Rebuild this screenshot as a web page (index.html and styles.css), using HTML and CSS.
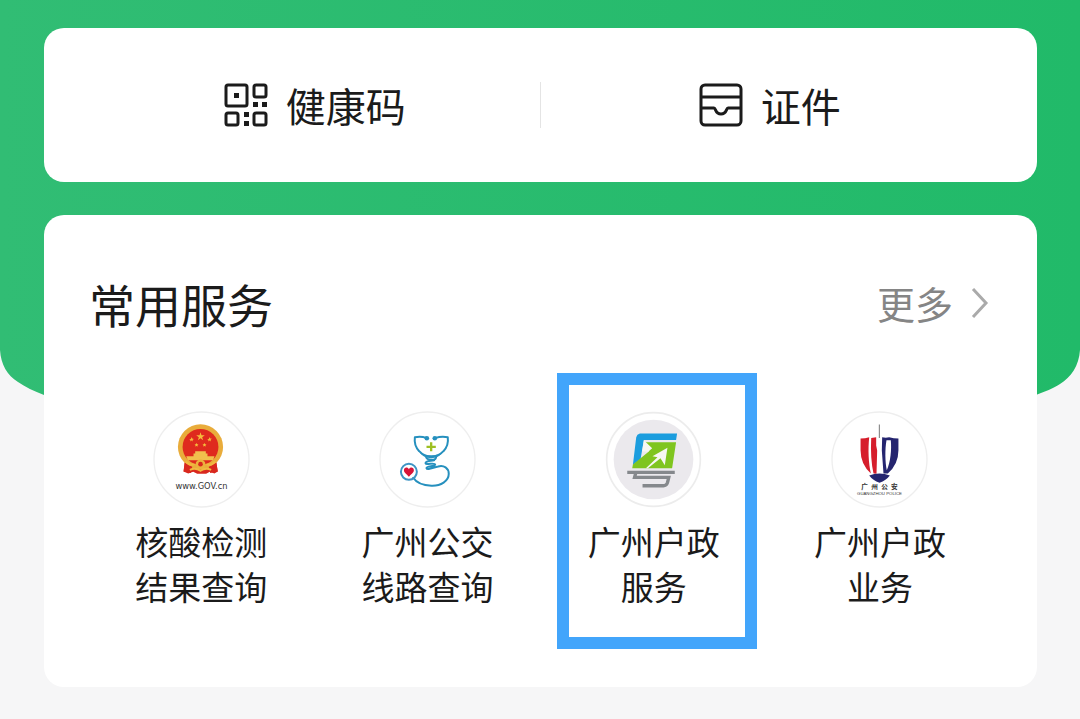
FILE: index.html
```html
<!DOCTYPE html>
<html lang="zh-CN">
<head>
    <meta charset="UTF-8">
    <meta name="viewport" content="width=device-width, initial-scale=1.0">
    <title>常用服务</title>
    <link rel="stylesheet" href="styles.css">
</head>
<body>
    <div class="page">
        <svg class="backdrop" viewBox="0 0 1080 420" preserveAspectRatio="none" aria-hidden="true">
            <defs>
                <linearGradient id="green" x1="0" x2="1" y1="0" y2="0">
                    <stop offset="0" stop-color="#31bd74"/>
                    <stop offset="1" stop-color="#21ba69"/>
                </linearGradient>
            </defs>
            <path fill="url(#green)" d="M0 0H1080V350C1079 366 1071 377 1060 384C1054 388 1044 392 1036 395Q960 420 860 420H220Q120 420 44 395C34 391 25 387 18 382C7 375 1 365 0 350Z"/>
        </svg>

        <main class="container">
            <nav class="card quick">
                <a class="quick-item quick-code" href="#">
                    <svg class="quick-icon" viewBox="0 0 44 44" fill="none" stroke="#1b1b1b" stroke-width="3" aria-hidden="true">
                        <rect x="2" y="2" width="21" height="21" rx="2"/>
                        <rect x="30" y="2" width="12" height="12" rx="2"/>
                        <rect x="2" y="30" width="12" height="12" rx="2"/>
                        <rect x="30" y="30" width="12" height="12" rx="2"/>
                        <path fill="#1b1b1b" stroke="none" d="M10 10h5v5h-5zM29 19h5v5h-5zM38 19h5v5h-5zM20 29h5v5h-5zM20 38h5v5h-5z"/>
                    </svg>
                    <span>健康码</span>
                </a>
                <a class="quick-item quick-cert" href="#">
                    <svg class="quick-icon" viewBox="0 0 44 44" fill="none" stroke="#1b1b1b" stroke-width="3" stroke-linejoin="round" aria-hidden="true">
                        <rect x="2" y="2" width="40" height="40" rx="4"/>
                        <path d="M2 14H42M2 25H15C17 25 16 31 22 31S27 25 29 25H42"/>
                    </svg>
                    <span>证件</span>
                </a>
            </nav>

            <section class="card services">
                <header class="services-header">
                    <h2 class="services-title">常用服务</h2>
                    <a class="more" href="#">更多
                        <svg class="more-arrow" viewBox="0 0 18 30" fill="none" stroke="#aaa" stroke-width="3" aria-hidden="true">
                            <path d="M2 1L15 15L2 29"/>
                        </svg>
                    </a>
                </header>

                <div class="service-grid">
                    <a class="service" href="#">
                        <svg class="service-icon" viewBox="22 16 292 292">
                            <circle cx="168" cy="162" r="143" fill="#fff" stroke="#eee" stroke-width="4"/>
                            <path fill="#d9281e" d="M119 163L114 198L128 204L143 199L155 205H182L193 199L207 204L217 198L211 163Z"/>
                            <circle cx="165" cy="124" r="68" fill="#e9ac3b"/>
                            <circle cx="165" cy="124" r="54" fill="#df2a1e"/>
                            <path fill="#f5bd3c" d="M165 80L168 89H178L170 95L173 104L165 98L157 104L160 95L152 89H162ZM138 94L140 99L145 100L141 103L142 108L138 105L133 108L135 103L131 100H136ZM192 94L194 99H199L195 103L197 108L192 105L188 108L189 103L185 100H190ZM153 112L155 116H159L156 119L157 123L153 121L149 123L150 119L147 116H151ZM177 112L179 116H183L180 119L181 123L177 121L173 123L174 119L171 116H175Z"/>
                            <path fill="#f1c04d" d="M149 137H181V144H186V152H207L203 164H127L122 152H144V144H149Z"/>
                            <path fill="#d9281e" d="M117 172L140 184L136 203L114 198ZM213 172L190 184L194 203L217 198Z"/>
                            <circle cx="165" cy="177" r="15" fill="#ecb13d"/>
                            <circle cx="165" cy="176" r="7" fill="#d9281e"/>
                            <path fill="none" stroke="#f1b941" stroke-width="6" d="M121 168Q133 182 147 176M209 168Q197 182 183 176M133 193Q150 185 165 196Q180 185 197 193"/>
                            <text class="gov-label" x="168" y="252">www.GOV.cn</text>
                        </svg>
                        <span class="service-name">核酸检测<br>结果查询</span>
                    </a>
                    <a class="service" href="#">
                        <svg class="service-icon" viewBox="20 16 292 292" fill="none">
                            <circle cx="166" cy="162" r="143" fill="#fff" stroke="#eee" stroke-width="4"/>
                            <g stroke="#2690be" stroke-width="6" stroke-linecap="round" stroke-linejoin="round">
                                <path d="M162 97C151 93 139 93 128 95C126 110 130 126 141 137C151 148 162 153 177 153C192 153 204 148 214 137C225 126 229 110 227 95C216 93 203 93 190 97"/>
                                <path d="M162 155Q164 162 176 163H184Q191 162 192 155"/>
                                <path d="M186 164C174 167 160 167 160 173C160 180 188 170 189 177C189 184 162 180 163 188C165 195 183 186 198 183C215 178 230 188 230 205C230 227 206 242 178 241C151 240 132 231 123 217"/>
                                <circle cx="110" cy="199" r="24" stroke="#3d94c4"/>
                            </g>
                            <path fill="#2690be" d="M143 141C160 153 194 153 211 141C203 153 192 158 177 158S151 153 143 141Z"/>
                            <circle cx="164" cy="98" r="7" fill="#2690be"/>
                            <circle cx="188" cy="98" r="7" fill="#2690be"/>
                            <path stroke="#9dbf22" stroke-width="7" d="M177 110V137M163 124H191"/>
                            <path fill="#d81438" d="M110 214C104 206 95 202 95 194C95 184 107 184 110 191C113 184 125 184 125 194C125 202 116 206 110 214Z"/>
                        </svg>
                        <span class="service-name">广州公交<br>线路查询</span>
                    </a>
                    <a class="service service-selected" href="#">
                        <svg class="service-icon" viewBox="20 16 292 292">
                            <circle cx="166" cy="162" r="141" fill="#fff" stroke="#ececec" stroke-width="5"/>
                            <circle cx="166" cy="162" r="120" fill="#ebe9ed"/>
                            <path fill="#1b9dde" d="M125 84H237L234 103H137L127 161L104 178L114 95Q116 86 125 84Z"/>
                            <path fill="#7fc51f" d="M138 110H234L222 188H102L104 177L152 138Z"/>
                            <path fill="#f6f7f3" d="M137 104L162 128L150 139L132 137ZM208 127L200 179L187 158L149 188H143L178 155L163 152Z"/>
                            <path fill="none" stroke="#85888c" stroke-width="10" d="M87 201H230M113 201L109 216H212L208 232Q205 241 196 241H133"/>
                        </svg>
                        <span class="service-name">广州户政<br>服务</span>
                    </a>
                    <a class="service" href="#">
                        <svg class="service-icon" viewBox="19 16 292 292">
                            <circle cx="165" cy="162" r="143" fill="#fff" stroke="#eee" stroke-width="4"/>
                            <path fill="#777" d="M163 57H166V97H163Z"/>
                            <path fill="#d61e2c" d="M108 99Q122 99 134 95C130 132 132 173 139 204Q108 176 108 134ZM140 97L155 95V120L158 135L156 205L147 204Q137 160 140 97Z"/>
                            <path fill="#25256f" fill-rule="evenodd" d="M173 95Q184 98 194 95Q208 99 222 99V134Q222 176 190 204H177L172 135ZM186 104C181 132 182 170 187 194C198 170 202 132 199 104Z"/>
                            <path fill="#25256f" d="M134 210Q149 204 165 204Q181 204 196 210Q185 225 165 232Q145 225 134 210Z"/>
                            <text class="police-label" x="165" y="252">广&#8194;州&#8194;公&#8194;安</text>
                            <text class="police-sub" x="165" y="268">GUANGZHOU POLICE</text>
                        </svg>
                        <span class="service-name">广州户政<br>业务</span>
                    </a>
                </div>
            </section>
        </main>
    </div>
</body>
</html>
```
FILE: styles.css
```css
:root {
    --text: #1b1b1b;
    --text-muted: #858585;
    --page-bg: #f6f6f7;
    --highlight: #42a5fb;
}

* {
    margin: 0;
    padding: 0;
    box-sizing: border-box;
}

body {
    font-family: "Noto Sans CJK SC", "Noto Sans", sans-serif;
    background-color: var(--page-bg);
    color: var(--text);
}

a {
    color: inherit;
    text-decoration: none;
}

/* backdrop and content share one grid cell */
.page {
    display: grid;
    grid-template-columns: 100%;
}

.backdrop,
.container {
    grid-area: 1 / 1;
}

.backdrop {
    width: 100%;
    height: 420px;
}

.container {
    display: flex;
    flex-direction: column;
    gap: 33px;
    padding: 28px 43px 30px 44px;
    z-index: 1;
}

.card {
    background-color: #fff;
    border-radius: 20px;
}

.quick {
    display: grid;
    grid-template-columns: 1fr 1fr;
    align-items: center;
    padding: 54px 0;
}

.quick-item {
    display: flex;
    align-items: center;
    justify-content: center;
    gap: 18px;
    height: 46px;
    font-size: 40px;
    line-height: 44px;
}

.quick-code {
    padding-left: 46px;
    border-right: 1px solid #e4e4e4;
}

.quick-cert {
    padding-right: 38px;
}

.quick-icon {
    width: 44px;
    height: 44px;
}

.services {
    padding: 56px 44px 78px;
}

.services-header {
    display: flex;
    align-items: center;
    justify-content: space-between;
    padding: 0 4px 0 1px;
}

.services-title {
    font-size: 46px;
    font-weight: 400;
    line-height: 64px;
}

.more {
    display: flex;
    align-items: center;
    gap: 18px;
    font-size: 38px;
    line-height: 60px;
    color: var(--text-muted);
}

.more-arrow {
    width: 18px;
    height: 30px;
}

.service-grid {
    display: grid;
    grid-template-columns: repeat(4, 1fr);
    margin-top: 76px;
}

.service {
    position: relative;
    display: flex;
    flex-direction: column;
    align-items: center;
    gap: 11px;
}

.service-icon {
    width: 97px;
    height: 97px;
}

.service-name {
    font-size: 33px;
    line-height: 45px;
    text-align: center;
}

.service-selected::after {
    content: "";
    position: absolute;
    inset: -38px 10px -40px 16px;
    border: 12px solid var(--highlight);
}

.gov-label,
.police-label,
.police-sub {
    text-anchor: middle;
    fill: #333;
}

.gov-label {
    font-family: "DejaVu Sans", sans-serif;
    font-size: 25px;
}

.police-label {
    font-size: 20px;
    font-weight: 700;
}

.police-sub {
    font-family: "Liberation Sans", sans-serif;
    font-size: 13px;
}
```
